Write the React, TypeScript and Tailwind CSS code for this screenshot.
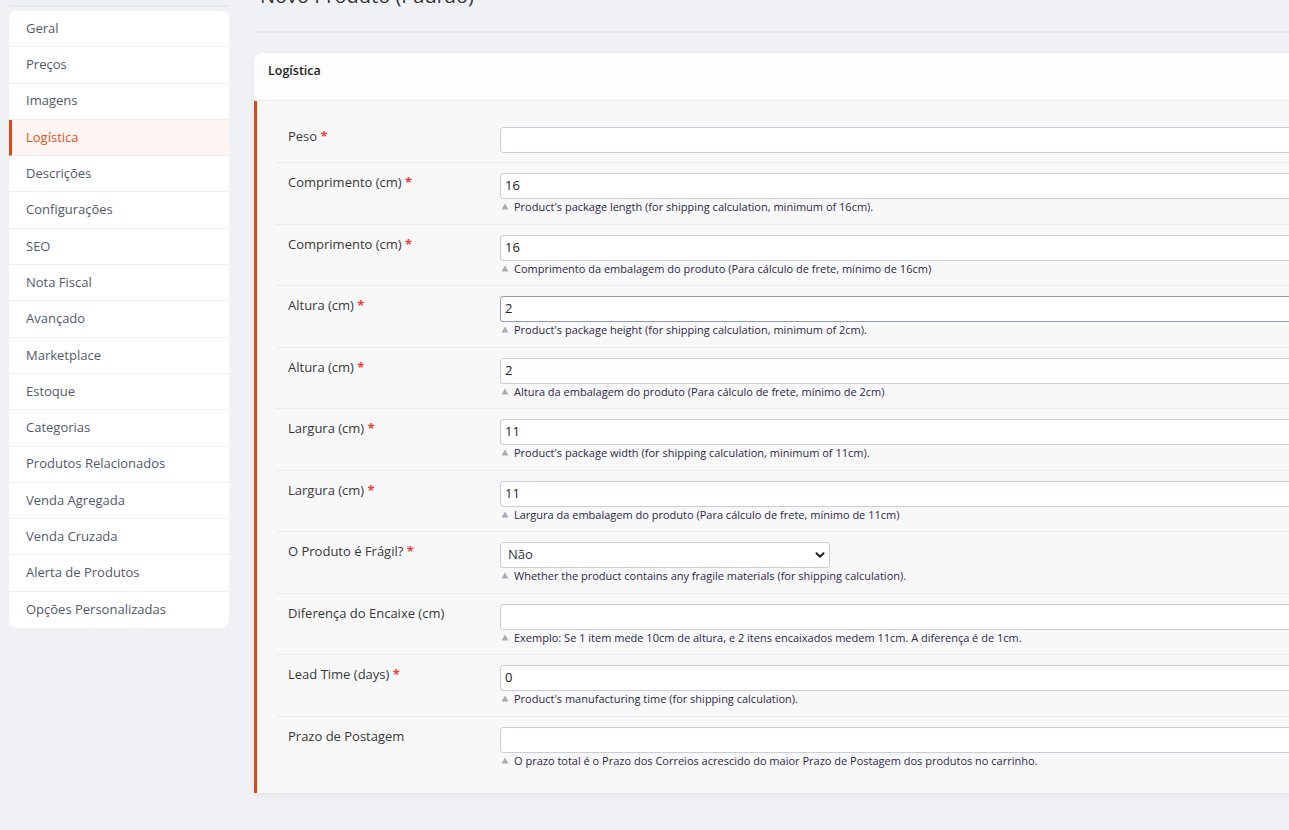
import React from "react";

const menu = [
  "Geral",
  "Preços",
  "Imagens",
  "Logística",
  "Descrições",
  "Configurações",
  "SEO",
  "Nota Fiscal",
  "Avançado",
  "Marketplace",
  "Estoque",
  "Categorias",
  "Produtos Relacionados",
  "Venda Agregada",
  "Venda Cruzada",
  "Alerta de Produtos",
  "Opções Personalizadas",
];

type Field = {
  label: string;
  required?: boolean;
  value?: string;
  hint?: string;
  select?: boolean;
  focused?: boolean;
};

const fields: Field[] = [
  { label: "Peso", required: true, value: "" },
  {
    label: "Comprimento (cm)",
    required: true,
    value: "16",
    hint: "Product's package length (for shipping calculation, minimum of 16cm).",
  },
  {
    label: "Comprimento (cm)",
    required: true,
    value: "16",
    hint: "Comprimento da embalagem do produto (Para cálculo de frete, mínimo de 16cm)",
  },
  {
    label: "Altura (cm)",
    required: true,
    value: "2",
    focused: true,
    hint: "Product's package height (for shipping calculation, minimum of 2cm).",
  },
  {
    label: "Altura (cm)",
    required: true,
    value: "2",
    hint: "Altura da embalagem do produto (Para cálculo de frete, mínimo de 2cm)",
  },
  {
    label: "Largura (cm)",
    required: true,
    value: "11",
    hint: "Product's package width (for shipping calculation, minimum of 11cm).",
  },
  {
    label: "Largura (cm)",
    required: true,
    value: "11",
    hint: "Largura da embalagem do produto (Para cálculo de frete, mínimo de 11cm)",
  },
  {
    label: "O Produto é Frágil?",
    required: true,
    select: true,
    value: "Não",
    hint: "Whether the product contains any fragile materials (for shipping calculation).",
  },
  {
    label: "Diferença do Encaixe (cm)",
    value: "",
    hint: "Exemplo: Se 1 item mede 10cm de altura, e 2 itens encaixados medem 11cm. A diferença é de 1cm.",
  },
  {
    label: "Lead Time (days)",
    required: true,
    value: "0",
    hint: "Product's manufacturing time (for shipping calculation).",
  },
  {
    label: "Prazo de Postagem",
    value: "",
    hint: "O prazo total é o Prazo dos Correios acrescido do maior Prazo de Postagem dos produtos no carrinho.",
  },
];

function Hint({ text }: { text: string }) {
  return (
    <div className="flex items-center h-[15px] text-[11px] leading-[15px] text-[#2c2948]">
      <svg width="8" height="7" viewBox="0 0 8 7" className="mr-[5px] ml-[1px]">
        <path d="M4 0.5 L7.5 6.5 L0.5 6.5 Z" fill="#a7adb6" />
      </svg>
      <span className="whitespace-nowrap">{text}</span>
    </div>
  );
}

function Row({ f, last }: { f: Field; last: boolean }) {
  return (
    <div
      className={`flex pl-[12px] ${f.hint ? "pt-[10px] pb-[9.5px]" : "pt-[10px] pb-[9px]"} ${
        last ? "" : "border-b border-[#e8ecf1]"
      }`}
    >
      <div className="w-[212px] shrink-0 text-[13px] leading-[18px] text-[#383838]">
        {f.label}
        {f.required && <span className="text-[#ee3b3b] font-bold"> *</span>}
      </div>
      <div className="flex-1 min-w-0">
        {f.select ? (
          <div className="w-[330px] h-[26px] bg-white border border-[#c9cfd8] rounded-[3px] flex items-center justify-between pl-[7px] pr-[3px] text-[13px] text-[#333]">
            <span>{f.value}</span>
            <svg width="12" height="12" viewBox="0 0 12 12">
              <path
                d="M2.5 4.2 L6 7.7 L9.5 4.2"
                fill="none"
                stroke="#222"
                strokeWidth="2"
                strokeLinecap="round"
                strokeLinejoin="round"
              />
            </svg>
          </div>
        ) : (
          <div
            className={`h-[26px] bg-white border rounded-[3px] flex items-center pl-[4px] text-[13px] text-[#222] ${
              f.focused ? "border-[#8f9bb0]" : "border-[#c9cfd8]"
            }`}
          >
            {f.value}
          </div>
        )}
        {f.hint && <Hint text={f.hint} />}
      </div>
    </div>
  );
}

export default function App() {
  return (
    <div
      className="w-full h-[830px] overflow-hidden bg-[#eff1f5] flex"
      style={{ fontFamily: "'Open Sans', 'Noto Sans', sans-serif" }}
    >
      {/* side menu */}
      <div className="w-[229px] shrink-0 pl-[9px]">
        <div className="mt-[5px] h-[2px] bg-[#e3e8ef]" />
        <div className="mt-[4px] bg-white rounded-[7px] overflow-hidden">
          {menu.map((m, i) => {
            const active = m === "Logística";
            return (
              <div
                key={m}
                className={`h-[36.3px] flex items-center text-[13px] ${
                  i < menu.length - 1 ? "border-b border-[#eceef1]" : ""
                } ${
                  active
                    ? "bg-[#fff6f3] text-[#e8501a] border-l-[3px] border-l-[#e0480f] pl-[14px]"
                    : "text-[#515a6b] pl-[17px]"
                }`}
              >
                {m}
              </div>
            );
          })}
        </div>
      </div>

      {/* main content */}
      <div className="ml-[25px] w-[1100px] shrink-0">
        <div className="mt-[-20px] h-[32px] pl-[6px] text-[20px] leading-[32px] text-[#333] whitespace-nowrap">
          Novo Produto (Padrão)
        </div>
        <div className="mt-[19px] h-[2px] bg-[#e2e6eb]" />

        <div className="mt-[20px] rounded-tl-[8px] shadow-[0_2px_6px_rgba(0,0,0,0.06)] overflow-hidden">
          <div className="h-[48px] bg-[#fdfdfd] border-b border-[#eceef1] pt-[9px] pl-[14px] text-[12.5px] leading-[18px] font-semibold text-[#222]">
            Logística
          </div>
          <div className="bg-[#f8f8f8] border-l-[3px] border-[#e0480f] pt-[16px] pb-[16px] pl-[19px]">
            {fields.map((f, i) => (
              <Row key={i} f={f} last={i === fields.length - 1} />
            ))}
          </div>
        </div>
      </div>
    </div>
  );
}
